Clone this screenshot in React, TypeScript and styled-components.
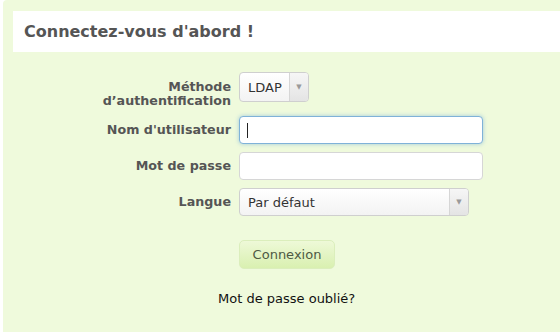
import React from "react";
import styled, { createGlobalStyle } from "styled-components";

const GlobalStyle = createGlobalStyle`
  html, body {
    margin: 0;
    padding: 0;
    background: #ffffff;
  }
  body {
    font-family: "DejaVu Sans", Verdana, sans-serif;
  }
`;

const Page = styled.div`
  width: 560px;
  height: 332px;
  padding-left: 3px;
  box-sizing: border-box;
  overflow: hidden;
`;

const Panel = styled.div`
  height: 100%;
  background: #effadc;
  border-top-left-radius: 4px;
  padding-top: 11px;
  padding-left: 10px;
  box-sizing: border-box;
`;

const Header = styled.div`
  background: #ffffff;
  height: 41px;
  display: flex;
  align-items: center;
  padding-left: 11px;
  font-size: 16px;
  font-weight: bold;
  color: #555555;
`;

const Form = styled.form`
  display: grid;
  grid-template-columns: 218px 1fr;
  column-gap: 8px;
  row-gap: 8px;
  margin-top: 20px;
  align-items: center;
`;

const Label = styled.label`
  text-align: right;
  font-size: 12.7px;
  font-weight: bold;
  color: #555555;
  line-height: 14px;
`;

const TallLabel = styled(Label)`
  align-self: start;
  padding-top: 8px;
`;

const Field = styled.div<{ $top?: boolean }>`
  display: flex;
  align-self: ${(p) => (p.$top ? "start" : "center")};
`;

const Input = styled.div<{ $focused?: boolean }>`
  width: 244px;
  height: 28px;
  box-sizing: border-box;
  background: #ffffff;
  border: 1px solid ${(p) => (p.$focused ? "#7fb2d8" : "#d6d6d6")};
  border-radius: 4px;
  box-shadow: ${(p) =>
    p.$focused ? "0 0 4px rgba(110, 170, 220, 0.6)" : "none"};
  display: flex;
  align-items: center;
  padding-left: 7px;
`;

const Caret = styled.span`
  width: 1px;
  height: 15px;
  background: #222;
`;

const Select = styled.div<{ $width: number; $height: number }>`
  width: ${(p) => p.$width}px;
  height: ${(p) => p.$height}px;
  box-sizing: border-box;
  border: 1px solid #cfcfcf;
  border-radius: 4px;
  background: linear-gradient(#ffffff, #f3f3f3);
  display: flex;
  align-items: stretch;
  font-size: 13px;
  color: #333;
`;

const SelectValue = styled.span`
  flex: 1;
  display: flex;
  align-items: center;
  padding-left: 8px;
`;

const SelectArrow = styled.span`
  width: 18px;
  border-left: 1px solid #d6d6d6;
  background: linear-gradient(#f6f6f6, #e4e4e4);
  border-radius: 0 3px 3px 0;
  display: flex;
  align-items: center;
  justify-content: center;
  color: #9a9a9a;
  font-size: 7px;
`;

const Button = styled.button`
  grid-column: 2;
  justify-self: start;
  margin-top: 16px;
  width: 96px;
  height: 29px;
  border: 1px solid #dbeebc;
  border-radius: 5px;
  background: linear-gradient(#eef9d8, #d9f0b0);
  font-family: "DejaVu Sans", Verdana, sans-serif;
  font-size: 13px;
  color: #4e5a44;
  cursor: pointer;
`;

const Forgot = styled.div`
  margin-top: 22px;
  padding-left: 205px;
  font-size: 13px;
  color: #111;
`;

export default function App() {
  return (
    <>
      <GlobalStyle />
      <Page>
        <Panel>
          <Header>Connectez-vous d'abord !</Header>
          <Form>
            <TallLabel>
              Méthode
              <br />
              d’authentification
            </TallLabel>
            <Field $top>
              <Select $width={70} $height={30}>
                <SelectValue>LDAP</SelectValue>
                <SelectArrow>▼</SelectArrow>
              </Select>
            </Field>
            <Label>Nom d'utilisateur</Label>
            <Field>
              <Input $focused>
                <Caret />
              </Input>
            </Field>
            <Label>Mot de passe</Label>
            <Field>
              <Input />
            </Field>
            <Label>Langue</Label>
            <Field>
              <Select $width={230} $height={28}>
                <SelectValue>Par défaut</SelectValue>
                <SelectArrow>▼</SelectArrow>
              </Select>
            </Field>
            <Button type="button">Connexion</Button>
          </Form>
          <Forgot>Mot de passe oublié?</Forgot>
        </Panel>
      </Page>
    </>
  );
}
